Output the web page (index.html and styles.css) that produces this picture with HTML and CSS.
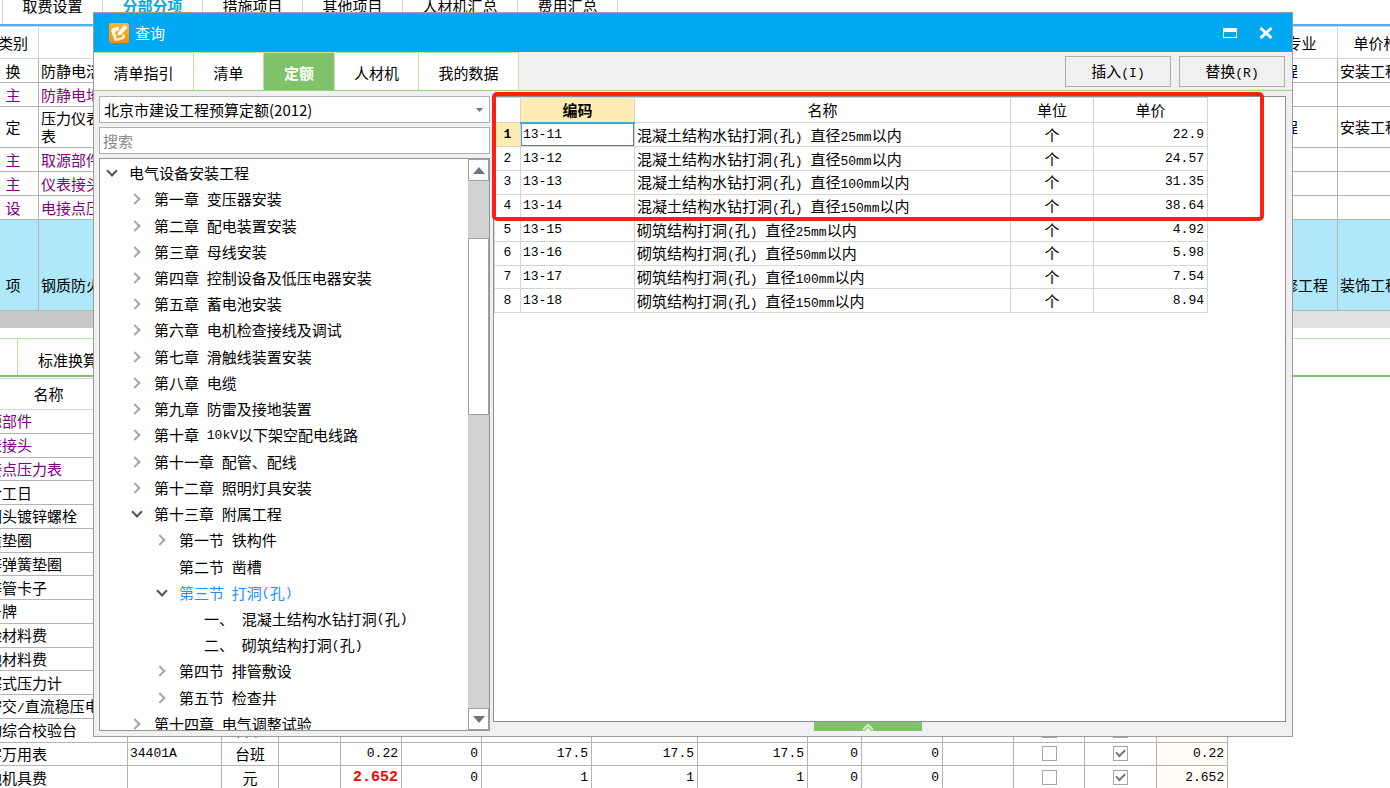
FILE: index.html
```html
<!DOCTYPE html>
<html lang="zh-CN">
<head>
<meta charset="utf-8">
<title>查询</title>
<link rel="stylesheet" href="styles.css">
</head>
<body>
<main class="app">
  <nav class="app-tabs">
    <a href="#fee">取费设置</a><a href="#items" class="on">分部分项</a><a href="#measures">措施项目</a><a href="#other">其他项目</a><a href="#labor" class="wide">人材机汇总</a><a href="#cost">费用汇总</a>
  </nav>
  <div class="clip">
    <table class="main-grid">
      <colgroup><col class="m-kind"><col><col class="m-major"><col class="m-file"></colgroup>
      <thead><tr class="head"><th>类别</th><th></th><th>取费专业</th><th>单价构成文件</th></tr></thead>
      <tbody>
        <tr><td>换</td><td>防静电活动地板</td><td>安装工程</td><td>安装工程</td></tr>
        <tr class="material"><td>主</td><td>防静电地板</td><td></td><td></td></tr>
        <tr class="tall"><td>定</td><td>压力仪表<br>表</td><td>安装工程</td><td>安装工程</td></tr>
        <tr class="material"><td>主</td><td>取源部件</td><td></td><td></td></tr>
        <tr class="material"><td>主</td><td>仪表接头</td><td></td><td></td></tr>
        <tr class="material"><td>设</td><td>电接点压力表</td><td></td><td></td></tr>
        <tr class="selected"><td>项</td><td>钢质防火门</td><td>装饰装修工程</td><td>装饰工程</td></tr>
      </tbody>
    </table>
  </div>
  <div class="hscroll"><div class="hscroll-thumb"></div></div>
  <nav class="sub-tabs"><a href="#usage" class="stub" aria-label="工料机显示"></a><a href="#convert">标准换算</a></nav>
  <div class="clip">
    <table class="detail-grid">
      <colgroup><col class="w158"><col class="w94"><col class="w57"><col class="w62"><col class="w61"><col class="w80"><col class="w110"><col class="w106"><col class="w110"><col class="w54"><col class="w81"><col class="w71"><col class="w71"><col class="w72"><col class="w71"></colgroup>
      <thead><tr class="head"><th>名称</th><th colspan="14"></th></tr></thead>
      <tbody>
        <tr class="material"><td>取源部件</td><td colspan="14"></td></tr>
        <tr class="material"><td>仪表接头</td><td colspan="14"></td></tr>
        <tr class="material"><td>电接点压力表</td><td colspan="14"></td></tr>
        <tr><td>综合工日</td><td colspan="14"></td></tr>
        <tr><td>半圆头镀锌螺栓</td><td colspan="14"></td></tr>
        <tr><td>木质垫圈</td><td colspan="14"></td></tr>
        <tr><td>镀锌弹簧垫圈</td><td colspan="14"></td></tr>
        <tr><td>镀锌管卡子</td><td colspan="14"></td></tr>
        <tr><td>位号牌</td><td colspan="14"></td></tr>
        <tr><td>校验材料费</td><td colspan="14"></td></tr>
        <tr><td>其他材料费</td><td colspan="14"></td></tr>
        <tr><td>活塞式压力计</td><td colspan="14"></td></tr>
        <tr><td>精密交<span class="n">/</span>直流稳压电源</td><td colspan="14"></td></tr>
        <tr><td>自动综合校验台</td><td></td><td class="c">台班</td><td></td><td class="num">0.08</td><td class="num">0</td><td class="num">15.38</td><td class="num">15.38</td><td class="num">15.38</td><td class="num">0</td><td class="num">0</td><td></td><td class="c"><input type="checkbox" aria-label="暂估"></td><td class="c"><input type="checkbox" checked aria-label="计价"></td><td class="num total">0.08</td></tr>
        <tr><td>数字万用表</td><td class="n">34401A</td><td class="c">台班</td><td></td><td class="num">0.22</td><td class="num">0</td><td class="num">17.5</td><td class="num">17.5</td><td class="num">17.5</td><td class="num">0</td><td class="num">0</td><td></td><td class="c"><input type="checkbox" aria-label="暂估"></td><td class="c"><input type="checkbox" checked aria-label="计价"></td><td class="num total">0.22</td></tr>
        <tr><td>其他机具费</td><td></td><td class="c">元</td><td></td><td class="num alert">2.652</td><td class="num">0</td><td class="num">1</td><td class="num">1</td><td class="num">1</td><td class="num">0</td><td class="num">0</td><td></td><td class="c"><input type="checkbox" aria-label="暂估"></td><td class="c"><input type="checkbox" checked aria-label="计价"></td><td class="num total">2.652</td></tr>
      </tbody>
    </table>
  </div>
</main>

<section class="dialog" role="dialog" aria-labelledby="dialog-title">
  <header class="titlebar">
    <svg class="logo" viewBox="0 0 20 20" aria-hidden="true">
      <defs><linearGradient id="amber" x1="0" y1="0" x2="0" y2="1"><stop offset="0" stop-color="#ffb52b"/><stop offset="1" stop-color="#ef8f10"/></linearGradient></defs>
      <rect width="20" height="20" rx="2" fill="url(#amber)"/>
      <path d="M10 3.500 4 5Q1.500 6 2.500 9L5 16.500q1 2 3 1.500l6-2q2.500-1 2-4l-2-1-1 3-5 1.500L6 9l4-2z" fill="#fff6e0"/>
      <path d="M8.500 12.500 9 9 15.500 2 18.500 4.500 12 12Z" fill="#fff"/>
    </svg>
    <h1 id="dialog-title">查询</h1>
    <button class="win" aria-label="最大化"><svg width="14" height="10" viewBox="0 0 14 10"><path d="M0 0h14v10H0zM1 4v5h12V4z" fill="#fff" fill-rule="evenodd"/></svg></button>
    <button class="win" aria-label="关闭"><svg width="14" height="12" viewBox="0 0 14 12"><path d="m1.500 1 11 10m0-10-11 10" stroke="#fff" stroke-width="3"/></svg></button>
  </header>
  <div class="toolbar">
    <div class="tabs" role="tablist">
      <button role="tab" class="t1">清单指引</button><button role="tab" class="t2">清单</button><button role="tab" class="t3 on" aria-selected="true">定额</button><button role="tab" class="t4">人材机</button><button role="tab" class="t5">我的数据</button>
    </div>
    <button class="action">插入<span class="n">(I)</span></button>
    <button class="action">替换<span class="n">(R)</span></button>
  </div>
  <div class="body">
    <div class="side">
      <div class="combo">
        <select aria-label="定额库"><option>北京市建设工程预算定额(2012)</option></select>
        <svg width="7" height="4" viewBox="0 0 7 4" aria-hidden="true"><path d="M0 0h7L3.500 4z" fill="#70747e"/></svg>
      </div>
      <input class="search" type="text" placeholder="搜索" aria-label="搜索">
      <div class="tree-box">
        <ul class="tree" role="tree">
          <li role="treeitem" class="l0 open">电气设备安装工程</li>
          <li role="treeitem" class="l1 shut">第一章<span class="n">&nbsp;</span>变压器安装</li>
          <li role="treeitem" class="l1 shut">第二章<span class="n">&nbsp;</span>配电装置安装</li>
          <li role="treeitem" class="l1 shut">第三章<span class="n">&nbsp;</span>母线安装</li>
          <li role="treeitem" class="l1 shut">第四章<span class="n">&nbsp;</span>控制设备及低压电器安装</li>
          <li role="treeitem" class="l1 shut">第五章<span class="n">&nbsp;</span>蓄电池安装</li>
          <li role="treeitem" class="l1 shut">第六章<span class="n">&nbsp;</span>电机检查接线及调试</li>
          <li role="treeitem" class="l1 shut">第七章<span class="n">&nbsp;</span>滑触线装置安装</li>
          <li role="treeitem" class="l1 shut">第八章<span class="n">&nbsp;</span>电缆</li>
          <li role="treeitem" class="l1 shut">第九章<span class="n">&nbsp;</span>防雷及接地装置</li>
          <li role="treeitem" class="l1 shut">第十章<span class="n">&nbsp;10kV</span>以下架空配电线路</li>
          <li role="treeitem" class="l1 shut">第十一章<span class="n">&nbsp;</span>配管、配线</li>
          <li role="treeitem" class="l1 shut">第十二章<span class="n">&nbsp;</span>照明灯具安装</li>
          <li role="treeitem" class="l1 open">第十三章<span class="n">&nbsp;</span>附属工程</li>
          <li role="treeitem" class="l2 shut">第一节<span class="n">&nbsp;</span>铁构件</li>
          <li role="treeitem" class="l2">第二节<span class="n">&nbsp;</span>凿槽</li>
          <li role="treeitem" class="l2 open current">第三节<span class="n">&nbsp;</span>打洞<span class="n">(</span>孔<span class="n">)</span></li>
          <li role="treeitem" class="l3">一、<span class="n">&nbsp;</span>混凝土结构水钻打洞<span class="n">(</span>孔<span class="n">)</span></li>
          <li role="treeitem" class="l3">二、<span class="n">&nbsp;</span>砌筑结构打洞<span class="n">(</span>孔<span class="n">)</span></li>
          <li role="treeitem" class="l2 shut">第四节<span class="n">&nbsp;</span>排管敷设</li>
          <li role="treeitem" class="l2 shut">第五节<span class="n">&nbsp;</span>检查井</li>
          <li role="treeitem" class="l1 shut">第十四章<span class="n">&nbsp;</span>电气调整试验</li>
        </ul>
        <div class="vscroll">
          <button aria-label="向上滚动"><svg width="12" height="7" viewBox="0 0 12 7"><path d="M0 7 6 0l6 7z" fill="#70747e"/></svg></button>
          <div class="gap-top"></div><div class="thumb"></div><div class="gap-bottom"></div>
          <button aria-label="向下滚动"><svg width="12" height="7" viewBox="0 0 12 7"><path d="M0 0h12L6 7z" fill="#70747e"/></svg></button>
        </div>
      </div>
    </div>
    <div class="result">
      <div class="pane">
        <table class="quota">
          <colgroup><col class="q-no"><col class="q-code"><col class="q-name"><col class="q-unit"><col class="q-price"></colgroup>
          <thead><tr><th></th><th class="hot">编码</th><th>名称</th><th>单位</th><th>单价</th></tr></thead>
          <tbody>
            <tr><td class="no hot">1</td><td class="n cell-focus">13-11</td><td>混凝土结构水钻打洞<span class="n">(</span>孔<span class="n">)&nbsp;</span>直径<span class="n">25mm</span>以内</td><td class="c">个</td><td class="num">22.9</td></tr>
            <tr><td class="no">2</td><td class="n">13-12</td><td>混凝土结构水钻打洞<span class="n">(</span>孔<span class="n">)&nbsp;</span>直径<span class="n">50mm</span>以内</td><td class="c">个</td><td class="num">24.57</td></tr>
            <tr><td class="no">3</td><td class="n">13-13</td><td>混凝土结构水钻打洞<span class="n">(</span>孔<span class="n">)&nbsp;</span>直径<span class="n">100mm</span>以内</td><td class="c">个</td><td class="num">31.35</td></tr>
            <tr><td class="no">4</td><td class="n">13-14</td><td>混凝土结构水钻打洞<span class="n">(</span>孔<span class="n">)&nbsp;</span>直径<span class="n">150mm</span>以内</td><td class="c">个</td><td class="num">38.64</td></tr>
            <tr><td class="no">5</td><td class="n">13-15</td><td>砌筑结构打洞<span class="n">(</span>孔<span class="n">)&nbsp;</span>直径<span class="n">25mm</span>以内</td><td class="c">个</td><td class="num">4.92</td></tr>
            <tr><td class="no">6</td><td class="n">13-16</td><td>砌筑结构打洞<span class="n">(</span>孔<span class="n">)&nbsp;</span>直径<span class="n">50mm</span>以内</td><td class="c">个</td><td class="num">5.98</td></tr>
            <tr><td class="no">7</td><td class="n">13-17</td><td>砌筑结构打洞<span class="n">(</span>孔<span class="n">)&nbsp;</span>直径<span class="n">100mm</span>以内</td><td class="c">个</td><td class="num">7.54</td></tr>
            <tr><td class="no">8</td><td class="n">13-18</td><td>砌筑结构打洞<span class="n">(</span>孔<span class="n">)&nbsp;</span>直径<span class="n">150mm</span>以内</td><td class="c">个</td><td class="num">8.94</td></tr>
          </tbody>
        </table>
        <div class="marker"></div>
      </div>
      <button class="expand" aria-label="展开"><svg width="12" height="8" viewBox="0 0 12 8"><path d="m1 7 5-5 5 5" fill="none" stroke="#d5efca" stroke-width="2"/><path d="m3 8 3-3 3 3z" fill="#fff"/></svg></button>
    </div>
  </div>
</section>
</body>
</html>
```

FILE: styles.css
```css
*, *::before, *::after { box-sizing: border-box; }

body {
  margin: 0;
  height: 100vh;
  overflow: hidden;
  position: relative;
  background: #fff;
  color: #000;
  font: 15px/18px "Noto Sans CJK SC", sans-serif;
}

button, input, select { font: inherit; color: inherit; margin: 0; }
button { padding: 0; border: 0; background: none; }
a { color: inherit; text-decoration: none; }
table { border-collapse: collapse; table-layout: fixed; }
th { font-weight: 400; }
td, th { padding: 0 2px; white-space: nowrap; }

.n, .num, .no { font-family: "Liberation Mono", monospace; font-size: 13px; }
span.n { line-height: 1; }
.num { text-align: right; padding-right: 3px; }
.c, .no { text-align: center; }
.clip { overflow: hidden; }

/* Main window */
.app-tabs {
  display: flex;
  height: 26px;
  padding-left: 2px;
  border-bottom: 2px solid #45b9e6;
}
.app-tabs a {
  width: 100px;
  border-right: 1px solid #d5d5d5;
  text-align: center;
  line-height: 12px;
}
.app-tabs a:first-child { width: 101px; border-left: 1px solid #d5d5d5; }
.app-tabs .wide { width: 115px; }
.app-tabs .on { color: #0aa5ee; font-weight: 700; }

.main-grid { width: calc(100% + 83px); margin: 0 0 0 -13px; }
.m-kind { width: 51px; }
.m-major { width: 102px; }
.m-file { width: 122px; }
.main-grid td, .main-grid th, .detail-grid td, .detail-grid th { border: 1px solid #b4b4b4; }
.main-grid td:first-child, .main-grid th { text-align: center; }
.main-grid tr { height: 24px; }
.main-grid .head { height: 32px; }
.main-grid .tall { height: 41px; }
.main-grid .selected { height: 91px; background: #aee8fa; }
.main-grid .selected td { vertical-align: bottom; padding-bottom: 16px; }
.main-grid th, .detail-grid th { border-color: #d5d5d5; }
.material { color: #800080; }

.hscroll { height: 17px; background: #e1e1e1; }
.hscroll-thumb { width: 50%; height: 100%; background: #c8c8c8; }

.sub-tabs {
  display: flex;
  height: 39px;
  margin-top: 10px;
  border-top: 1px solid #b7e8a3;
  border-bottom: 2px solid #7fc269;
}
.sub-tabs a { padding: 0 20px; line-height: 42px; border-right: 1px solid #b7e8a3; }
.sub-tabs .stub { width: 18px; padding: 0; }

.detail-grid { width: 1258px; height: 412px; margin: 1px 0 0 -31px; }
.detail-grid .head { height: 31px; }
.w158 { width: 158px; }
.w110 { width: 110px; }
.w106 { width: 106px; }
.w94 { width: 94px; }
.w81 { width: 81px; }
.w80 { width: 80px; }
.w72 { width: 72px; }
.w71 { width: 71px; }
.w62 { width: 62px; }
.w61 { width: 61px; }
.w57 { width: 57px; }
.w54 { width: 54px; }
.total { background: #fffbf5; }
.alert { color: #f00; font-weight: 700; font-size: 15px; line-height: 1; }
.detail-grid input {
  appearance: none;
  display: block;
  width: 15px;
  height: 15px;
  margin: 0 auto;
  border: 1px solid #a5a5a5;
  background: #fff;
}
.detail-grid input:checked::after {
  content: "";
  display: block;
  width: 9px;
  height: 6px;
  margin: 2px;
  border: solid #70747e;
  border-width: 0 0 2px 2px;
  transform: rotate(-45deg);
}

/* Query dialog */
.dialog {
  position: absolute;
  inset: 12px 97px 51px 93px;
  display: flex;
  flex-direction: column;
  border: 1px solid #9c9c9c;
  background: #f0f0f0;
}
.titlebar {
  display: flex;
  align-items: center;
  height: 39px;
  padding: 0 19px 0 15px;
  gap: 6px;
  background: #00a8f2;
  color: #fff;
}
.logo { width: 20px; height: 20px; }
.titlebar h1 { flex: 1; margin: 0; font-size: 15px; font-weight: 400; line-height: 18px; }
.win { display: grid; place-items: center; width: 14px; height: 20px; margin-left: 16px; }

.toolbar {
  display: flex;
  align-items: center;
  gap: 8px;
  height: 39px;
  padding-right: 7px;
  border-bottom: 1px solid #93d67c;
}
.tabs { display: flex; flex: 1; height: 38px; }
.tabs button {
  padding-top: 2px;
  border: solid #b7e8a3;
  border-width: 1px 1px 0 0;
  background: #fff;
}
.tabs .on { background: #7fc269; color: #fff; font-weight: 700; }
.t1 { width: 100px; }
.t2 { width: 70px; }
.t3 { width: 71px; }
.t4 { width: 84px; }
.t5 { width: 100px; }
.action { width: 106px; height: 31px; border: 1px solid #adadad; }

.body { flex: 1; display: flex; gap: 3px; min-height: 0; padding: 5px 6px 5px 5px; }
.side { display: flex; flex-direction: column; gap: 4px; width: 391px; }
.combo { display: grid; grid-template-columns: 1fr; align-items: center; }
.combo > * { grid-area: 1 / 1; }
.combo svg { justify-self: end; margin-right: 7px; }
.combo select {
  appearance: none;
  width: 100%;
  height: 27px;
  padding: 0 4px;
  border: 1px solid #adb0b5;
  border-radius: 0;
  background: #fff;
}
.search { width: 100%; height: 27px; padding: 0 3px; border: 1px solid #adb0b5; background: #fff; }
.search::placeholder { color: #8a8a8a; }

.tree-box {
  flex: 1;
  display: flex;
  min-height: 0;
  border: 1px solid #9296a0;
  background: #fff;
  overflow: hidden;
}
.tree {
  flex: 1;
  display: grid;
  grid-auto-rows: 1fr;
  height: 578px;
  margin: 0;
  padding: 1px 0 0;
  list-style: none;
  white-space: nowrap;
}
.tree li { display: flex; align-items: center; }
.tree li::before {
  content: "";
  flex: none;
  width: 8px;
  height: 8px;
  margin: 0 15px 0 1px;
}
.tree .shut::before { border: solid #a8a8a8; border-width: 2px 2px 0 0; transform: rotate(45deg); }
.tree .open::before { border: solid #555; border-width: 0 2px 2px 0; transform: rotate(45deg); margin: 0 13px 4px 3px; }
.tree .l0 { padding-left: 5px; }
.tree .l1 { padding-left: 30px; }
.tree .l2 { padding-left: 55px; }
.tree .l3 { padding-left: 80px; }
.current { color: #1e90ff; }

.vscroll { display: flex; flex-direction: column; width: 21px; background: #d2d2d2; }
.vscroll button, .thumb { border: 1px solid #a0a0a0; background: #fff; }
.vscroll button { display: grid; place-items: center; height: 22px; }
.gap-top { flex: 57; }
.thumb { flex: 176; }
.gap-bottom { flex: 294; }

.result { flex: 1; display: flex; flex-direction: column; min-width: 0; }
.pane { position: relative; flex: 1; border: 1px solid #878d99; background: #fff; }
.quota { width: 713px; height: 216px; margin: 0; }
.quota td, .quota th { border: 1px solid #d5d5d5; }
.quota thead tr { height: 25px; }
.q-no { width: 26px; }
.q-code { width: 114px; }
.q-name { width: 376px; }
.q-unit { width: 83px; }
.q-price { width: 114px; }
.quota .hot { background: #ffecb3; font-weight: 700; }
.quota .cell-focus { box-shadow: inset 1px 0 #3aa9dc, inset -1px -1px #777; }
.quota th.hot { border-bottom: 2px solid #3aa9dc; }
.marker {
  position: absolute;
  inset: -5px 21px auto -2px;
  height: 129px;
  border: 4px solid #fb2012;
  border-radius: 5px;
}
.expand { display: grid; place-items: center; align-self: center; width: 108px; height: 9px; margin-right: 44px; background: #7fc269; }
```
